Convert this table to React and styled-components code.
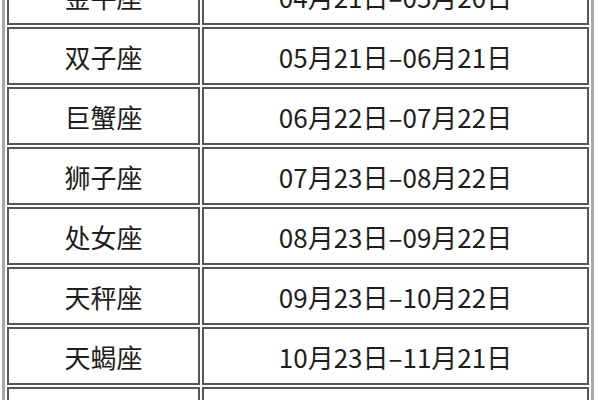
import styled, { createGlobalStyle } from 'styled-components';

const GlobalStyle = createGlobalStyle`
  html, body {
    margin: 0;
    padding: 0;
    background: #ffffff;
  }
`;

const Page = styled.div`
  width: 600px;
  height: 400px;
  overflow: hidden;
  padding-left: 2px;
  box-sizing: border-box;
  background: #ffffff;
`;

const Table = styled.table`
  margin-top: -38px;
  width: 592px;
  border: 3px solid #a8a8a8;
  border-collapse: separate;
  border-spacing: 2px;
  background: #ffffff;
  table-layout: fixed;
`;

const Cell = styled.td`
  width: ${(props) => props.$width}px;
  height: 54px;
  padding: 0;
  border: 2px solid #555555;
  text-align: center;
  vertical-align: middle;
  font-family: "Noto Sans CJK SC", "Noto Sans", sans-serif;
  font-size: 26px;
  color: #1e1e1e;
  white-space: nowrap;
`;

const rows = [
  ['金牛座', '04月21日–05月20日'],
  ['双子座', '05月21日–06月21日'],
  ['巨蟹座', '06月22日–07月22日'],
  ['狮子座', '07月23日–08月22日'],
  ['处女座', '08月23日–09月22日'],
  ['天秤座', '09月23日–10月22日'],
  ['天蝎座', '10月23日–11月21日'],
  ['射手座', '11月22日–12月21日'],
];

export default function App() {
  return (
    <>
      <GlobalStyle />
      <Page>
        <Table>
          <tbody>
            {rows.map(([sign, dates]) => (
              <tr key={sign}>
                <Cell $width={189}>{sign}</Cell>
                <Cell $width={383}>{dates}</Cell>
              </tr>
            ))}
          </tbody>
        </Table>
      </Page>
    </>
  );
}
